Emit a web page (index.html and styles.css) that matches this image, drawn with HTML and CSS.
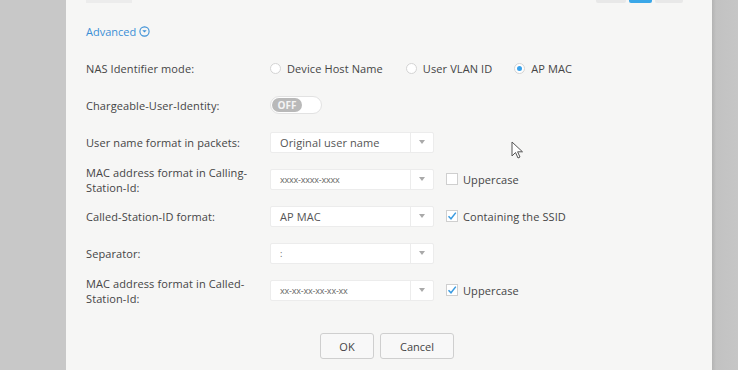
FILE: index.html
```html
<!DOCTYPE html>
<html>
<head>
<meta charset="utf-8">
<link rel="stylesheet" href="styles.css">
</head>
<body>
<div class="screen">
  <div class="side side-left"></div>
  <div class="dialog">
    <div class="topbar">
      <span class="tb-left"></span>
      <span class="tb-spacer"></span>
      <span class="tb-btn"></span>
      <span class="tb-btn tb-blue"></span>
      <span class="tb-btn"></span>
    </div>
    <div class="advanced">Advanced
      <svg class="adv-icon" width="11" height="11" viewBox="0 0 11 11"><circle cx="5.5" cy="5.5" r="4.6" fill="none" stroke="#3a8fd6" stroke-width="1.1"/><path d="M3.3 4.3 L5.5 6.6 L7.7 4.3 Z" fill="#3a8fd6"/></svg>
    </div>
    <div class="form">
      <div class="label">NAS Identifier mode:</div>
      <div class="control radios">
        <span class="radio"><span class="dot"></span>Device Host Name</span>
        <span class="radio"><span class="dot"></span>User VLAN ID</span>
        <span class="radio"><span class="dot on"></span>AP MAC</span>
      </div>

      <div class="label">Chargeable-User-Identity:</div>
      <div class="control">
        <span class="toggle"><span class="knob">OFF</span></span>
      </div>

      <div class="label">User name format in packets:</div>
      <div class="control">
        <span class="select"><span class="val">Original user name</span><span class="arrow"></span></span>
      </div>

      <div class="label two">MAC address format in Calling-<br>Station-Id:</div>
      <div class="control">
        <span class="select"><span class="val small">xxxx-xxxx-xxxx</span><span class="arrow"></span></span>
        <span class="check"><span class="box"></span>Uppercase</span>
      </div>

      <div class="label">Called-Station-ID format:</div>
      <div class="control">
        <span class="select"><span class="val">AP MAC</span><span class="arrow"></span></span>
        <span class="check"><span class="box"><svg width="10" height="10" viewBox="0 0 10 10"><path d="M1.5 5.2 L4 7.8 L8.8 1.6" fill="none" stroke="#3a9be0" stroke-width="1.5"/></svg></span>Containing the SSID</span>
      </div>

      <div class="label">Separator:</div>
      <div class="control">
        <span class="select"><span class="val small">:</span><span class="arrow"></span></span>
      </div>

      <div class="label two">MAC address format in Called-<br>Station-Id:</div>
      <div class="control">
        <span class="select"><span class="val small">xx-xx-xx-xx-xx-xx</span><span class="arrow"></span></span>
        <span class="check"><span class="box"><svg width="10" height="10" viewBox="0 0 10 10"><path d="M1.5 5.2 L4 7.8 L8.8 1.6" fill="none" stroke="#3a9be0" stroke-width="1.5"/></svg></span>Uppercase</span>
      </div>
    </div>
    <div class="actions">
      <button class="btn ok">OK</button>
      <button class="btn cancel">Cancel</button>
    </div>
    <svg class="cursor" width="14" height="20" viewBox="0 0 14 20"><path d="M1 1 L1 15 L4.5 11.5 L7 17 L9 16 L6.6 10.8 L11.5 10.8 Z" fill="#fff" stroke="#555" stroke-width="1"/></svg>
  </div>
  <div class="side side-right"></div>
</div>
</body>
</html>
```

FILE: styles.css
```css
html, body {
  margin: 0;
  padding: 0;
  width: 738px;
  height: 370px;
  overflow: hidden;
  background: #c9c9c9;
  font-family: "Open Sans", "Noto Sans", sans-serif;
}

.screen {
  display: flex;
  width: 738px;
  height: 370px;
}

.side-left {
  width: 66px;
  background: #c8c8c8;
  flex: none;
}

.side-right {
  width: 26px;
  flex: none;
  background: linear-gradient(to right, #b3b3b3 0px, #c2c2c2 4px, #c6c6c6 100%);
}

.dialog {
  position: relative;
  width: 646px;
  flex: none;
  background: #f6f6f5;
  padding: 0 0 0 20px;
  box-sizing: border-box;
}

.topbar {
  display: flex;
  align-items: flex-end;
  height: 3px;
  overflow: hidden;
}
.tb-left {
  width: 46px;
  height: 20px;
  background: #ececec;
}
.tb-spacer { flex: 1; }
.tb-btn {
  width: 30px;
  height: 20px;
  margin-left: 3px;
  background: #e8e8e8;
  border-radius: 2px;
}
.tb-blue {
  width: 23px;
  background: #3aa7e8;
}
.tb-btn:last-child { margin-right: 29px; width: 28px; }

.advanced {
  margin-top: 21px;
  height: 16px;
  line-height: 16px;
  font-size: 11px;
  color: #3a8fd6;
  display: flex;
  align-items: center;
  gap: 3px;
}
.adv-icon { margin-top: -2px; }

.form {
  margin-top: 17px;
  display: grid;
  grid-template-columns: 184px 1fr;
  grid-auto-rows: 22px;
  row-gap: 15px;
  font-size: 11px;
  color: #454545;
  letter-spacing: 0.1px;
}

.label {
  display: flex;
  align-items: center;
  line-height: 15px;
}
.label.two {
  line-height: 15px;
  padding-top: 1px;
}

.control {
  display: flex;
  align-items: center;
}

.radios .radio {
  display: flex;
  align-items: center;
}
.radio .dot {
  width: 11px;
  height: 11px;
  border: 1px solid #d4d4d4;
  border-radius: 50%;
  background: #fff;
  margin-right: 6px;
  box-sizing: border-box;
  display: flex;
  align-items: center;
  justify-content: center;
}
.radio .dot.on::after {
  content: "";
  width: 5px;
  height: 5px;
  border-radius: 50%;
  background: #3aa2ea;
}
.radios .radio:nth-child(2) { margin-left: 23px; }
.radios .radio:nth-child(3) { margin-left: 22px; }

.toggle {
  display: flex;
  width: 52px;
  height: 18px;
  box-sizing: border-box;
  border: 1px solid #e2e2e2;
  border-radius: 9px;
  background: #fff;
  padding: 1px;
}
.knob {
  width: 30px;
  height: 14px;
  border-radius: 7px;
  background: #b9b9b9;
  color: #f4f4f4;
  font-size: 10px;
  font-weight: 700;
  line-height: 14px;
  text-align: center;
}

.select {
  display: flex;
  width: 164px;
  height: 21px;
  box-sizing: border-box;
  border: 1px solid #ececec;
  border-radius: 2px;
  background: #fff;
}
.select .val {
  flex: 1;
  padding-left: 9px;
  line-height: 19px;
  color: #555;
}
.select .val.small {
  font-size: 9px;
  color: #666;
  letter-spacing: -0.2px;
}
.select .arrow {
  width: 22px;
  border-left: 1px solid #ececec;
  display: flex;
  align-items: center;
  justify-content: center;
}
.select .arrow::after {
  content: "";
  border-left: 3px solid transparent;
  border-right: 3px solid transparent;
  border-top: 4px solid #a9a9a9;
}

.check {
  display: flex;
  align-items: center;
  margin-left: 12px;
}
.check .box {
  width: 12px;
  height: 12px;
  box-sizing: border-box;
  border: 1px solid #cfcfcf;
  background: #fff;
  margin-right: 5px;
  display: flex;
  align-items: center;
  justify-content: center;
}

.actions {
  margin-top: 32px;
  display: flex;
  justify-content: center;
  gap: 6px;
  padding-right: 24px;
}
.btn {
  height: 26px;
  border: 1px solid #cfcfcf;
  border-radius: 3px;
  background: #f8f8f8;
  font-family: inherit;
  font-size: 11px;
  color: #444;
  padding: 0;
}
.btn.ok { width: 54px; }
.btn.cancel { width: 74px; }

.cursor {
  position: absolute;
  left: 445px;
  top: 141px;
}
```
